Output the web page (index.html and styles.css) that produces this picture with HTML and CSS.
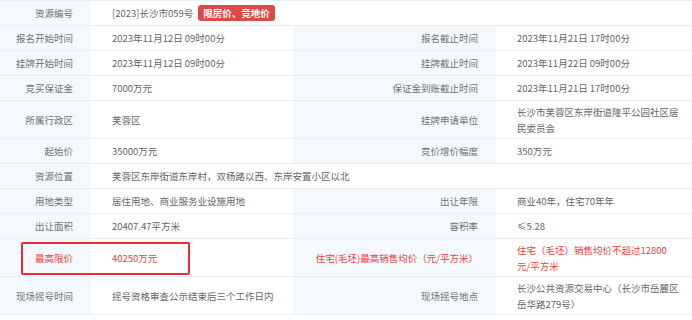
FILE: index.html
```html
<!DOCTYPE html>
<html lang="zh-CN">
<head>
<meta charset="utf-8">
<title>资源信息</title>
<link rel="stylesheet" href="styles.css">
</head>
<body>
<div class="info">
  <div class="cell label">资源编号</div>
  <div class="cell value span3">[2023]长沙市059号<span class="tag">限房价、竞地价</span></div>

  <div class="cell label">报名开始时间</div>
  <div class="cell value">2023年11月12日 09时00分</div>
  <div class="cell label">报名截止时间</div>
  <div class="cell value">2023年11月21日 17时00分</div>

  <div class="cell label">挂牌开始时间</div>
  <div class="cell value">2023年11月12日 09时00分</div>
  <div class="cell label">挂牌截止时间</div>
  <div class="cell value">2023年11月22日 09时00分</div>

  <div class="cell label">竞买保证金</div>
  <div class="cell value">7000万元</div>
  <div class="cell label">保证金到账截止时间</div>
  <div class="cell value">2023年11月21日 17时00分</div>

  <div class="cell label">所属行政区</div>
  <div class="cell value">芙蓉区</div>
  <div class="cell label">挂牌申请单位</div>
  <div class="cell value">长沙市芙蓉区东岸街道隆平公园社区居民委员会</div>

  <div class="cell label">起始价</div>
  <div class="cell value">35000万元</div>
  <div class="cell label">竞价增价幅度</div>
  <div class="cell value">350万元</div>

  <div class="cell label">资源位置</div>
  <div class="cell value span3">芙蓉区东岸街道东岸村，双杨路以西、东岸安置小区以北</div>

  <div class="cell label">用地类型</div>
  <div class="cell value">居住用地、商业服务业设施用地</div>
  <div class="cell label">出让年限</div>
  <div class="cell value">商业40年，住宅70年年</div>

  <div class="cell label">出让面积</div>
  <div class="cell value">20407.47平方米</div>
  <div class="cell label">容积率</div>
  <div class="cell value">≤5.28</div>

  <div class="cell label red">最高限价</div>
  <div class="cell value red">40250万元</div>
  <div class="cell label red">住宅(毛坯)最高销售均价（元/平方米）</div>
  <div class="cell value red">住宅（毛坯）销售均价不超过12800<br>元/平方米</div>

  <div class="cell label">现场摇号时间</div>
  <div class="cell value">摇号资格审查公示结束后三个工作日内</div>
  <div class="cell label">现场摇号地点</div>
  <div class="cell value">长沙公共资源交易中心（长沙市岳麓区岳华路279号）</div>

  <div class="highlight"></div>
</div>
</body>
</html>
```

FILE: styles.css
```css
html, body {
  margin: 0;
  padding: 0;
  background: #ffffff;
}

body {
  font-family: "Noto Sans CJK SC", "Noto Sans", sans-serif;
  font-size: 9.5px;
  color: #666666;
}

.info {
  position: relative;
  display: grid;
  grid-template-columns: 91px 202px 203px 196px;
  width: 692px;
  border-bottom: 1px solid #e9eef3;
}

.cell {
  box-sizing: border-box;
  min-height: 25px;
  border-top: 1px solid #e9eef3;
  padding: 2.5px 10px 2.5px 21px;
  line-height: 16px;
  display: flex;
  align-items: center;
}

.label {
  background: #f4f9fd;
  color: #707070;
  justify-content: flex-end;
  text-align: right;
  padding: 2.5px 18px 2.5px 8px;
}

.value {
  background: #ffffff;
  color: #666666;
}

.span3 {
  grid-column: span 3;
}

.red {
  color: #f03c3c;
}

.tag {
  display: inline-block;
  margin-left: 5px;
  padding: 0 5px;
  height: 16px;
  line-height: 16px;
  background: #dc4a47;
  color: #ffffff;
  border-radius: 3px;
  font-weight: bold;
}

.highlight {
  position: absolute;
  left: 21px;
  top: 242px;
  width: 169px;
  height: 33px;
  box-sizing: border-box;
  border: 2px solid #ec2d2d;
  border-radius: 2px;
  pointer-events: none;
}
```
